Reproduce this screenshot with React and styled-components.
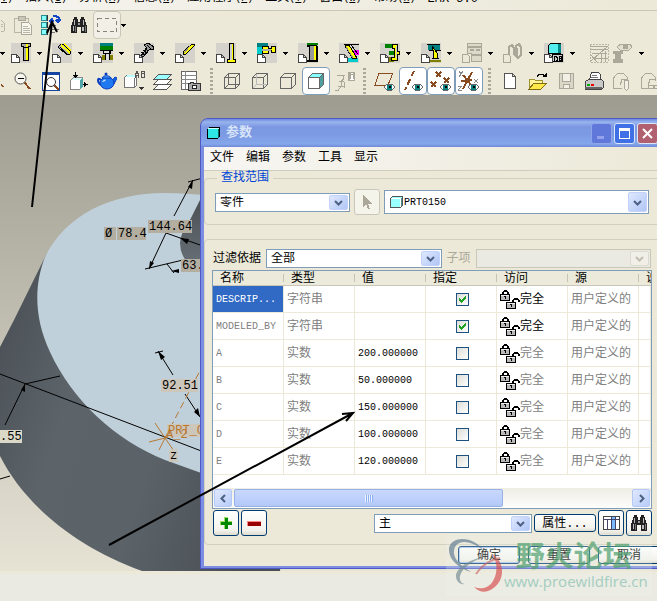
import React, { useState } from 'react'
import styled, { createGlobalStyle, css } from 'styled-components'

const GlobalStyle = createGlobalStyle`
    * {
        box-sizing: border-box;
    }
    body {
        margin: 0;
        background: #ebeae2;
        font-family: "Liberation Mono", "Noto Sans CJK SC", monospace;
        font-size: 12px;
        line-height: 14px;
        color: #000;
    }
    button, select, input {
        font: inherit;
        color: inherit;
        margin: 0;
    }
`

const Desktop = styled.div`
    position: relative;
    display: flex;
    flex-direction: column;
    min-height: 100vh;
    overflow: hidden;
`

// ---------- main window bars ----------

const MenuBar = styled.nav`
    display: flex;
    align-items: flex-end;
    gap: 12px;
    height: 11px;
    padding-bottom: 4px;
    overflow: hidden;
    white-space: nowrap;
    background: linear-gradient(90deg, #f4f3ee, #ece9d8);
    border-bottom: 1px solid #cbc7b8;
`

const MenuLink = styled.a`
    flex: none;
    color: #000;
    text-decoration: none;
    line-height: 14px;
    &:first-child {
        margin-left: -5px;
    }
`

const AccessKey = styled.span`
    font-size: 10px;
`

const ToolRow = styled.div`
    display: flex;
    align-items: center;
    height: 28px;
    overflow: hidden;
    background: #ece9d8;
`

const ToolButton = styled.button`
    flex: none;
    display: flex;
    align-items: center;
    justify-content: center;
    width: 28px;
    height: 28px;
    padding: 0;
    border: 1px solid ${p => (p.$on ? '#7f9db9' : p.$framed ? '#c9c6b8' : 'transparent')};
    border-radius: 4px;
    background: ${p => (p.$on ? '#fff' : p.$framed ? '#f2f0e6' : 'transparent')};
`

const CutButton = styled(ToolButton)`
    width: 9px;
    justify-content: flex-end;
`

const SplitButton = styled.button`
    flex: none;
    display: flex;
    align-items: center;
    gap: 6px;
    width: 41px;
    height: 22px;
    padding: 0;
    border: 0;
    background: transparent;
`

const ArrowButton = styled.button`
    flex: none;
    display: flex;
    align-items: center;
    width: 11px;
    height: 20px;
    padding: 0;
    border: 0;
    background: transparent;
`

const Separator = styled.span`
    flex: none;
    width: 3px;
    height: 26px;
    margin: 0 5px;
    background: repeating-linear-gradient(#aaa799 0 2px, #ece9d8 2px 4px);
`

const Viewport = styled.main`
    flex: 1;
    display: flex;
    align-items: stretch;
    min-height: 476px;
    background: linear-gradient(#9e9c90, #e6e3d5);
    > svg {
        flex: 1;
        display: block;
        height: auto;
    }
`

const StatusBar = styled.footer`
    height: 30px;
    background: #ebeae2;
    border-top: 3px solid #ece9d8;
`

// ---------- icons ----------

const Ico = ({ w = 20, h = 20, children, ...rest }) => (
    <svg width={w} height={h} viewBox={`0 0 ${w} ${h}`} fill="none" shapeRendering="crispEdges" aria-hidden="true" {...rest}>
        {children}
    </svg>
)

const Triangle = () => (
    <Ico w={5} h={3}><path d="M0 0h5v1H4v1H3v1H2V2H1V1H0z" fill="#000" /></Ico>
)

const Page = () => (
    <path d="M.5 11.5h5l3 3v5h-8zM5.5 11.5v3h3" fill="#fff" stroke="#444" />
)

const ToolIcon = ({ off, children }) => (
    <Ico>
        {!off && <path d="M0 0h20v20H0z" fill="#d4d2cb" />}
        {children}
        {off ? <path d="M.5 11.5h5l2 2v6h-7z" fill="#ece9d8" stroke="#aca899" /> : <Page />}
    </Ico>
)

const Binoculars = () => (
    <Ico w={18} h={16}>
        <path d="M4 0h3v2h1v3h2V2h1V0h3v2h1v3h1v3h1v8h-6v-6H7v6H1V8h1V5h1V2h1z" fill="#222" />
        <path d="M4 3h1v5H4zM13 3h1v5h-1zM3 9h1v5H3zM12 10h2v4h-2z" fill="#bbb" />
        <path d="M5 9h1v6H5zM15 9h1v6h-1z" fill="#777" />
        <path d="M8 6h2v2H8z" fill="#999" />
    </Ico>
)

const PasteIcon = () => (
    <Ico>
        <path d="M1.500 3.500h14v14h-14z" fill="#ece9d8" stroke="#b9b6a6" />
        <path d="M5 1h7v4H5z" fill="#c9c6b6" stroke="#aca899" />
        <path d="M8.500 7.500h7l3 3v9h-10z" fill="#f6f5ee" stroke="#aca899" />
        <path d="M10 11h5M10 13h7M10 15h7M10 17h7" stroke="#b9b6a6" />
    </Ico>
)

const TreeIcon = () => (
    <Ico>
        {[0, 7, 14].map(y => (
            <g key={y}>
                <path d={`M0.500 ${y + .5}h5v5h-5z`} fill="#8ff" stroke="#2a8d8d" />
                <path d={`M6 ${y}v6`} stroke="#333" />
            </g>
        ))}
        <path d="M9 10h6M9 14h9M9 17h5" stroke="#777" />
        <path d="M10 8V5M8 6h5M12 1h3l3 2v3M15 5h6" stroke="#1446c8" strokeWidth="2" />
        <path d="M8 6l3-4 2 4zM14 5h6l-3 4z" fill="#1446c8" />
    </Ico>
)

const MarqueeIcon = () => (
    <Ico w={20} h={14}><path d="M.5.5h19v13H.5z" stroke="#888577" strokeDasharray="4 3" /></Ico>
)

const ScrewIcon = () => (
    <ToolIcon>
        <path d="M10.500.5h9v3h-2v14h-5v-14h-2z" fill="#aaa" stroke="#000" />
        <path d="M15 1h2v16h-2z" fill="#ff0" />
        <path d="M12 4h6" stroke="#000" />
    </ToolIcon>
)
const PinsIcon = () => (
    <ToolIcon>
        <path d="M8 2l3-1 8 8-2 3-3-1-8-7z" fill="#aaa" stroke="#000" />
        <path d="M9 2l9 8M12 1l7 7" stroke="#ff0" strokeWidth="2" />
        <path d="M8 4l7 7M11 1l8 8" stroke="#000" />
    </ToolIcon>
)
const PlateIcon = () => (
    <ToolIcon>
        <path d="M7 0h13v3H7z" fill="#008080" />
        <path d="M7 3h13v4H7z" fill="#008000" />
        <path d="M9 12h11v5H9z" fill="#808000" />
        <path d="M7 7h13v1H7zM10 8h8v3h-8zM12 11h5v6h-5z" fill="#000" />
        <path d="M11 8h5v2h-5zM13 11h3v6h-3z" fill="#ddd" />
    </ToolIcon>
)
const BoltIcon = () => (
    <ToolIcon>
        <path d="M10 2l4-2 6 4-1 3-3-1-7 8-2-1 6-8z" fill="#999" stroke="#000" />
        <path d="M7 9l4 3M9 7l4 3M11 5l3 3M13 2l4 4" stroke="#000" strokeWidth="1" />
    </ToolIcon>
)
const RodIcon = () => (
    <ToolIcon>
        <path d="M17 1h2v2l-9 9-2-1V9z" fill="#ff0" stroke="#000" />
        <path d="M15 3l-6 7" stroke="#888" />
    </ToolIcon>
)
const PillarIcon = () => (
    <ToolIcon>
        <path d="M13.500.5h4v16h2v3h-8v-3h2z" fill="#ff0" stroke="#000" />
        <path d="M14 1h2v16h-2z" fill="#ccc" />
    </ToolIcon>
)
const NozzleIcon = () => (
    <ToolIcon>
        <path d="M0 0h11v4H0z" fill="#008080" />
        <path d="M0 4h5v7H0z" fill="#0cc" />
        <path d="M5.500 3.500h6v7h-6zM11.500 5.500h3v-2h4v6h-4v-2h-3z" fill="#ff0" stroke="#000" />
        <path d="M5 6h9v2H5z" fill="#aaa" />
    </ToolIcon>
)
const BushIcon = () => (
    <ToolIcon>
        <path d="M9 0h11v2H9z" fill="#008000" />
        <path d="M11.500 2.500h7v16h-7z" fill="#999" stroke="#000" />
        <path d="M16 3h2v15h-2z" fill="#ff0" />
        <path d="M9 3h2M9 18h11M19 3v15" stroke="#000" strokeWidth="2" />
    </ToolIcon>
)
const SliderIcon = () => (
    <ToolIcon>
        <path d="M15 7h5v5h-5z" fill="#f0f" />
        <path d="M9 15h10v4H9z" fill="#0cc" />
        <path d="M6 3l4-1 8 13-4 1z" fill="#ff0" stroke="#000" />
        <path d="M7 4l7 11" stroke="#888" />
        <path d="M5 1h15M12 2l7 9" stroke="#000" />
    </ToolIcon>
)
const LatchIcon = () => (
    <ToolIcon>
        <path d="M5 1h7v4H5zM9 8h5v4H9z" fill="#008000" />
        <path d="M9 14h5v5H9z" fill="#808000" />
        <path d="M12.500 1.500h5v7h2v3h-2v6h-6v-3h3v-9h-2z" fill="#ff0" stroke="#000" />
        <path d="M16 3v13" stroke="#ccc" />
    </ToolIcon>
)
const EjectIcon = () => (
    <ToolIcon>
        <path d="M7 2h12v5H7z" fill="#008080" />
        <path d="M6 1h13v1H6zM8 7h12v1H8z" fill="#000" />
        <path d="M11 3l5 7 1 5h-5l1-5z" fill="#ff0" stroke="#000" />
        <path d="M8 17h12v2H8z" fill="#808000" />
    </ToolIcon>
)
const OffBlockIcon = () => (
    <ToolIcon off>
        <path d="M5.500.5h14v18h-10v-8h-4z" fill="#dddac9" stroke="#aca899" />
        <path d="M6 4h13M8 7h4M14 7h4M9 12h10" stroke="#aca899" strokeWidth="2" />
    </ToolIcon>
)
const OffHooksIcon = () => (
    <ToolIcon off>
        <path d="M6 12V4l3-2 2 3v7M13 3l3-2 2 3v8l-3 3-3-3zM14 5v8" stroke="#aca899" strokeWidth="2" />
    </ToolIcon>
)
const DbIcon = () => (
    <ToolIcon>
        <path d="M4.500 2.500l2-2h10v10h-12z" fill="#5ee" stroke="#000" />
        <path d="M14 1h3v9h-3z" fill="#088" />
        <path d="M8.500 11.500h10v7h-10z" fill="#ccc" stroke="#000" />
        <path d="M10.500 13v5h2v-1h1v-3h-1v-1zM15.500 13.500h2v2h-2zv4h2v-2" stroke="#000" />
    </ToolIcon>
)
const OffGridIcon = () => (
    <Ico>
        <path d="M1 1h18v18H1z" stroke="#b9b6a6" strokeDasharray="2 1" />
        <path d="M1 3h18M1 6h18M3 10h15M2 18L18 4M2 12l6 7M12 10v9M16 8v11M4 15h15" stroke="#aca899" />
    </Ico>
)
const OffCamIcon = () => (
    <Ico>
        <path d="M0 8h10v3H8v5h2v4H0v-4h2v-5H0z" fill="#aca899" />
        <path d="M4 4l4-3h9l2 3-3 3h-9z" fill="#e2dfce" stroke="#aca899" />
        <path d="M10 2h5v4h-5z" fill="#aca899" />
    </Ico>
)

const ZoomOutIcon = () => (
    <Ico w={18} h={18}>
        <path d="M10 10l6 7" stroke="#8a4a20" strokeWidth="2" />
        <circle cx="6.500" cy="6.500" r="5.500" fill="#f6f5ee" stroke="#555" shapeRendering="auto" />
        <path d="M4 6h6v1H4z" fill="#000" />
    </Ico>
)
const RefitIcon = () => (
    <Ico w={18} h={19}>
        <path d="M.5.5h17v18H.5z" fill="#fff" stroke="#1446a0" />
        <path d="M0 0h18v3H0z" fill="#1446a0" />
        <path d="M11 12l6 6" stroke="#8a4a20" strokeWidth="2" />
        <circle cx="9" cy="10" r="4.500" fill="#fff" stroke="#333" shapeRendering="auto" />
    </Ico>
)
const OrientIcon = () => (
    <Ico w={18} h={18}>
        <path d="M.5 8.500l3-3h9v9l-3 3h-9z" fill="#d8f6f6" stroke="#888" />
        <path d="M1 8h9v9H1z" fill="#fff" />
        <path d="M10 8l3-3v9l-3 3z" fill="#4fa6a6" />
        <path d="M5.500 0v6M3 3.500h5M4 4.500h3M18 12.500h-5M14.500 10v5M15.500 11v3" stroke="#000" />
    </Ico>
)
const TeapotIcon = () => (
    <Ico w={20} h={18} shapeRendering="auto">
        <path d="M4 8C0 4 0 10 4 13" stroke="#0a3cc0" strokeWidth="2" />
        <path d="M14 10l4-5 2 1-3 6z" fill="#1468e8" stroke="#0a3cc0" />
        <ellipse cx="10" cy="11" rx="7" ry="6" fill="#1e78f0" stroke="#0a3cc0" />
        <path d="M5 6c1-3 8-3 9 0z" fill="#4aa0ff" stroke="#0a3cc0" />
        <circle cx="9" cy="2" r="1.500" fill="#0a3cc0" />
        <path d="M5 10c1-2 3-3 4-2-1 1-2 2-4 2z" fill="#bfe2ff" />
    </Ico>
)
const ViewsIcon = () => (
    <Ico w={22} h={20}>
        <path d="M.5 6.500l2-2h10v10l-2 2h-10z" fill="#fff" stroke="#777" />
        <path d="M1 6l2-2h9v2z" fill="#bff" />
        <path d="M10.500 7v9" stroke="#777" />
        <path d="M11.500 7V2.500h1v-2h1v2h1V7M12 4.500h2M17.500 6.500v-6h3v2h-3M20.500 3v3.500h-3" stroke="#555" />
        <path d="M15 16h5v1h-1v1h-1v1h-1v-1h-1v-1h-1z" fill="#333" />
    </Ico>
)
const LayersIcon = () => (
    <Ico w={20} h={17}>
        <path d="M1 16l5-5h13l-5 5z" fill="#fff" stroke="#555" />
        <path d="M1 11l5-5h13l-5 5z" fill="#fff" stroke="#555" />
        <path d="M1 6l5-5h13l-5 5z" fill="#9ff" stroke="#555" />
    </Ico>
)
const ReportIcon = () => (
    <Ico w={20} h={20}>
        <path d="M.5.5h15v18h-15z" fill="#fff" stroke="#666" />
        <path d="M0 4h16M0 8h16M0 12h16M4 0v18" stroke="#888" />
        <path d="M7.500 12.500h2v-1h3v1h7v7h-12z" fill="#aaa" stroke="#333" />
        <circle cx="13.500" cy="16" r="2" fill="#fff" stroke="#222" />
    </Ico>
)
const Cube = ({ front = '#ece9d8', top = '#ece9d8', side = '#ece9d8', hidden, wire = '#666' }) => (
    <Ico w={16} h={16}>
        <path d="M.5 4.500h11v11H.5z" fill={front} stroke="#666" />
        <path d="M.5 4.500l4-4h11l-4 4z" fill={top} stroke="#666" />
        <path d="M11.500 4.500l4-4v11l-4 4z" fill={side} stroke="#666" />
        {hidden && <path d="M4.500 1v10.500H15M4.500 11.500l-4 4" stroke={wire} />}
    </Ico>
)
const OffInfoIcon = () => (
    <Ico w={21} h={19}>
        <path d="M3 3.500h8M9.500 4v3l-2 2v5l-3 4H1M5 9.500h5M10.500 10v6M4 14.500h6" stroke="#aca899" />
        <path d="M14 0h7v9h-7z" fill="#aca899" />
        <path d="M17 1h2v1h-2zM17 3h2v4h1v1h-4V7h1z" fill="#fff" />
    </Ico>
)

const Eye = ({ x = 11, y = 13 }) => (
    <g transform={`translate(${x} ${y})`}>
        <path d="M0 3l3-3h5l3 3-3 3H3z" fill="#fff" stroke="#666" />
        <path d="M3 1h5v5H3z" fill="#0a7f7f" />
        <path d="M5 2h2v2H5z" fill="#000" />
    </g>
)
const PlaneIcon = () => (
    <Ico w={22} h={20}>
        <path d="M5 2h14l-5 12H1z" stroke="#8a4a20" />
        <Eye x={10} />
    </Ico>
)
const AxisIcon = () => (
    <Ico w={22} h={20}><path d="M12 0L3 19" stroke="#8a4a20" strokeWidth="2" strokeDasharray="6 3" /><Eye x={10} /></Ico>
)
const PointsIcon = () => (
    <Ico w={22} h={20}>
        <path d="M6 1l5 5M11 1l-5 5M1 11l5 5M6 11l-5 5M14 7l5 5M19 7l-5 5" stroke="#8a4a20" strokeWidth="2" />
        <Eye x={10} />
    </Ico>
)
const CsysIcon = () => (
    <Ico w={22} h={20}>
        <path d="M3 10l11-1M5 18L14 1M5 4l9 11" stroke="#8a4a20" strokeWidth="2" />
        <path d="M1 0l2 3 2-3M3 3L1 6M16 8l4 4M20 8l-4 4M0 15h4l-4 4h4" stroke="#888" />
        <Eye x={10} />
    </Ico>
)
const NewIcon = () => (
    <Ico w={12} h={16}><path d="M.5.5h8l3 3v12H.5zM8.500.5v3h3" fill="#fff" stroke="#555" /></Ico>
)
const OpenIcon = () => (
    <Ico w={20} h={17}>
        <path d="M1 16V6h5l1 1h7v4" fill="#fff39a" stroke="#a0922c" />
        <path d="M1 16l5-6h13l-6 6z" fill="#ffe94a" stroke="#806c10" />
        <path d="M9 4c2-4 6-4 8 0" stroke="#000" />
        <path d="M14 4h5V0z" fill="#000" />
    </Ico>
)
const SaveIcon = () => (
    <Ico w={15} h={16}>
        <path d="M.5.5h14v15H.5z" fill="#dad7c8" stroke="#aca899" />
        <path d="M3.500.5h8v8h-8zM4.500 11.500h6v4h-6z" fill="#f2f0e6" stroke="#aca899" />
    </Ico>
)
const PrintIcon = () => (
    <Ico w={19} h={18}>
        <path d="M4.500 7.500l2-7h7l2 2v5z" fill="#fff" stroke="#444" />
        <path d="M7 3h5M6 5h7" stroke="#777" />
        <path d="M.5 9.500l3-2h13l2 2v6l-2 2H.5z" fill="#c9c9c9" stroke="#444" />
        <path d="M0 15h17v2H0z" fill="#666" />
        <path d="M2 12h3v2H2z" fill="#0a0" />
        <path d="M6 12h3v2H6z" fill="#e00" />
    </Ico>
)
const MailIcon = ({ link }) => (
    <Ico w={20} h={19}>
        <path d="M1.500 16.500V6l4-4.500h6l4 4V9M1 16.500h9M9 7.500h6M8 13l2-5" stroke="#aca899" />
        {link
            ? <path d="M8.500 13.500h6v3h-6zM13.500 13.500h6v3h-6z" fill="#ece9d8" stroke="#aca899" />
            : <path d="M12.500 8.500h4v8l-2 2-2-2z" fill="#f2f0e6" stroke="#aca899" />}
    </Ico>
)

const CursorIcon = () => (
    <Ico w={10} h={15}><path d="M1 0v12l3-3 2 5h2l-2-5h4z" fill="#aca899" /></Ico>
)
const PartIcon = () => (
    <Ico w={13} h={12}>
        <path d="M.5 2.500l2-2h10v9l-2 2H.5z" fill="#9ff" stroke="#555" />
        <path d="M1 3h9v8H1z" fill="#9ff" />
        <path d="M1 2.500h9M10.500 2v9" stroke="#fff" />
        <path d="M11 2h1v8h-1z" fill="#4d8f8f" />
    </Ico>
)
const WindowIcon = () => (
    <Ico w={13} h={12}>
        <path d="M.5 2.500l2-2h10v9l-2 2H.5z" fill="#2ee6e6" stroke="#000" />
        <path d="M1 1h11v1H1z" fill="#cff" />
        <path d="M11 2h1v9h-1z" fill="#066" />
    </Ico>
)
const LocksIcon = () => (
    <Ico w={20} h={20}>
        <path d="M2 4V2h1V1h1V0h3v1h1v1h1v2H7V2H4v2z" fill="#000" />
        <path d="M12 13v-3h1V9h1V8h4v1h1v1h1v2h-2v-2h-4v3z" fill="#000" />
        <path d="M.5 4.500h9v6h-9zM6.500 12.500h9v6h-9z" fill="#b9b9b9" stroke="#000" />
        <path d="M1 5h8v1H1zM7 13h8v1H7z" fill="#eee" />
        <path d="M4 6h2v3H5V7H4zM10 14h2v3h-1v-2h-1z" fill="#000" />
    </Ico>
)
const PlusIcon = () => (
    <Ico w={12} h={12}>
        <path d="M4 0h4v4h4v4H8v4H4V8H0V4h4z" fill="#9fdf6a" />
        <path d="M5 1h3v4h4v3H8v4H5V8H1V5h4z" fill="#080" />
    </Ico>
)
const MinusIcon = () => (
    <Ico w={14} h={5}><path d="M0 0h14v5H0z" fill="#f88" /><path d="M1 1h13v4H1z" fill="#900" /></Ico>
)
const ColumnsIcon = () => (
    <Ico w={17} h={14}>
        <path d="M.5.5h16v13H.5z" fill="#fff" stroke="#444" />
        <path d="M8 1h4v12H8z" fill="#7ab8ff" />
        <path d="M0 3.500h17M4.500 3v11M8.500 0v14M12.500 0v14" stroke="#446" />
    </Ico>
)
const TickIcon = () => (
    <Ico w={7} h={7}><path d="M0 2h1v1h1v1h1V3h1V2h1V1h1V0h1v3H6v1H5v1H4v1H3v1H2V6H1V5H0z" fill="#21a121" /></Ico>
)
const Chevron = ({ dir = 'down', color = '#4d6185' }) => (
    <Ico w={9} h={9} shapeRendering="auto">
        <path
            d={{ down: 'M1 3l3.500 3.500L8 3', left: 'M6 1L2.500 4.500 6 8', right: 'M3 1l3.500 3.500L3 8' }[dir]}
            stroke={color}
            strokeWidth="2"
        />
    </Ico>
)

// ---------- parameter dialog ----------

const Dialog = styled.section`
    position: absolute;
    top: 118px;
    left: 200px;
    right: -8px;
    padding: 0 2px 2px 3px;
    border: 1px solid #4f58c8;
    border-radius: 8px 8px 0 0;
    background: #7b8ee0;
    overflow: hidden;
`

const TitleBar = styled.header`
    display: flex;
    align-items: center;
    gap: 6px;
    height: 28px;
    margin: 0 -2px 0 -3px;
    padding: 0 6px;
    background: linear-gradient(#6c88dc 0, #98b4ee 3px, #7c98e2 8px, #7c9ae4 15px, #84a6ea 25px, #7088d8 28px);
`

const DialogBody = styled.div`
    background: #ece9d8;
`

const Title = styled.h1`
    flex: 1;
    margin: 0;
    font-size: 13px;
    line-height: 16px;
    font-weight: bold;
    color: #d8e4f8;
`

const captionColors = {
    min: '#5f78da',
    max: '#3f70e6',
    close: '#b0606e',
}

const CaptionButton = styled.button`
    display: flex;
    align-items: center;
    justify-content: center;
    width: 21px;
    height: 21px;
    margin-left: -4px;
    padding: 0;
    border: 1px solid ${p => (p.$kind === 'min' ? '#90a6ea' : '#dce6fa')};
    border-radius: 3px;
    background: ${p => captionColors[p.$kind]};
`

const DialogMenu = styled.nav`
    display: flex;
    align-items: center;
    gap: 12px;
    height: 24px;
    padding: 0 6px 1px;
    background: linear-gradient(90deg, #f7f6f3, #ece9d8);
    border-bottom: 1px solid #d0cdbc;
`

const DialogMenuLink = styled.a`
    color: #000;
    text-decoration: none;
`

const Group = styled.fieldset`
    min-width: 0;
    margin: 0 1px ${p => (p.$last ? 0 : 14)}px 0;
    padding: 0;
    border: 1px solid #d0d0bf;
    border-radius: 4px;
`

const Legend = styled.legend`
    margin-left: 12px;
    padding: 1px 4px 0;
    height: 14px;
    line-height: 13px;
    color: #0046d5;
`

const ScopeRow = styled.div`
    display: flex;
    align-items: center;
    gap: 4px;
    padding: 4px 11px 9px 10px;
`

const FilterRow = styled.div`
    display: flex;
    align-items: center;
    gap: 5px;
    padding: 9px 9px 0 8px;
`

const Label = styled.label`
    white-space: nowrap;
    color: ${p => (p.$off ? '#aca899' : '#000')};
`

const SelectBox = styled.div`
    flex: ${p => p.$flex || '1 1 0'};
    min-width: 0;
    display: grid;
    grid-template-columns: auto 1fr;
    align-items: center;
    height: ${p => (p.$tall ? 24 : 19)}px;
    border: 1px solid ${p => (p.$off ? '#c9c7ba' : '#7f9db9')};
    background: ${p => (p.$off ? '#ebeae2' : '#fff')};
    > svg {
        grid-area: 1 / 1;
        margin-left: 5px;
    }
`

const Select = styled.select`
    grid-area: 1 / 1 / 2 / 3;
    width: 100%;
    height: 100%;
    padding: 1px 20px 0 ${p => (p.$icon ? 19 : 4)}px;
    border: 0;
    outline: 0;
    appearance: none;
    background: transparent;
    font-size: ${p => (p.$icon ? 10 : 12)}px;
`

const DropMark = styled.span`
    grid-area: 1 / 1 / 2 / 3;
    justify-self: end;
    align-self: stretch;
    display: flex;
    align-items: center;
    justify-content: center;
    width: 19px;
    margin: 1px;
    border-radius: 2px;
    pointer-events: none;
    background: ${p => (p.$off ? '#f0efe8' : 'linear-gradient(135deg, #dfe8fe, #b0c6f6)')};
    border: 1px solid ${p => (p.$off ? '#dddbcf' : '#c2d2fa')};
`

const GridBox = styled.div`
    margin: 2px 8px 0 7px;
    border: 1px solid #7f9db9;
    background: #fff;
    overflow: hidden;
`

const Table = styled.table`
    width: 100%;
    table-layout: fixed;
    border-collapse: separate;
    border-spacing: 0;
`

const NarrowCol = styled.col`
    width: 71px;
`

const Th = styled.th`
    height: 15px;
    padding: 2px 0 0 7px;
    font-weight: normal;
    text-align: left;
    line-height: 12px;
    white-space: nowrap;
    overflow: hidden;
    background: linear-gradient(90deg, transparent 70px, #c7c5b2 70px) 0 3px / 71px 8px no-repeat, #ebeadb;
    border-bottom: 1px solid #cbc7b8;
`

const Td = styled.td`
    height: 27px;
    padding: 1px 0 0 3px;
    border-right: 1px solid #ece9d8;
    border-bottom: 1px solid #ece9d8;
    white-space: nowrap;
    overflow: hidden;
    color: ${p => (p.$dark ? '#000' : '#808080')};
    ${p => p.$latin && css`font-size: 10px;`}
    ${p => p.$center && css`text-align: center;`}
    ${p => p.$selected && css`
        background: #316ac5;
        color: #fff;
    `}
`

const CheckCell = styled.span`
    display: grid;
    place-items: center;
    > * {
        grid-area: 1 / 1;
    }
    svg {
        pointer-events: none;
    }
`

const Check = styled.input`
    appearance: none;
    width: 13px;
    height: 13px;
    border: 1px solid #1c5180;
    background: linear-gradient(135deg, #dcdcd7, #fff);
`

const Access = styled.span`
    display: flex;
    align-items: center;
    svg {
        flex: none;
    }
`

const ScrollBar = styled.div`
    display: flex;
    gap: 2px;
    height: 20px;
    margin-top: 13px;
    padding: 1px;
    background: linear-gradient(#eeede5, #fdfdfb);
`

const ScrollButton = styled.button`
    flex: none;
    display: flex;
    align-items: center;
    justify-content: center;
    width: 18px;
    padding: 0;
    border: 1px solid #b4c8f6;
    border-radius: 2px;
    background: linear-gradient(135deg, #dfe8fe, #b9cdf9);
`

const Track = styled.div`
    flex: 1;
    display: flex;
`

const Thumb = styled.div`
    display: flex;
    align-items: center;
    justify-content: center;
    width: 68%;
    border: 1px solid #98b0e8;
    border-radius: 2px;
    background: linear-gradient(#c9d8fc, #bccffc 60%, #b4c8f6);
`

const Grip = styled.span`
    width: 8px;
    height: 7px;
    background: repeating-linear-gradient(90deg, #eef4fe 0 1px, #8cb0f8 1px 2px);
`

const GridTools = styled.div`
    display: flex;
    align-items: center;
    gap: 2px;
    padding: 1px 8px 8px;
`

const Spacer = styled.span`
    flex: 0 1 103px;
`

const XpButton = styled.button`
    flex: none;
    display: flex;
    align-items: center;
    justify-content: center;
    width: ${p => (p.$square ? 26 : 62)}px;
    height: ${p => (p.$square ? 26 : 18)}px;
    padding: ${p => (p.$square ? 0 : 1)}px 0 0;
    border: 1px solid ${p => (p.$off ? '#c9c7ba' : '#003c74')};
    border-radius: 3px;
    background: ${p => (p.$off ? '#f5f4ea' : 'linear-gradient(#fff, #f3f2ec 80%, #dedbcf)')};
    box-shadow: ${p => (p.$default ? 'inset 0 0 0 1px #a8c4f4' : 'none')};
`

const DialogFooter = styled.footer`
    display: flex;
    justify-content: flex-end;
    gap: 8px;
    padding: 1px 2px 2px;
`

// ---------- overlays ----------

const Watermark = styled.aside`
    position: absolute;
    right: 5px;
    bottom: 5px;
    display: flex;
    align-items: center;
    width: 206px;
    height: 62px;
    background: rgba(236, 244, 236, 0.25);
    pointer-events: none;
`

const WatermarkText = styled.div`
    display: flex;
    flex-direction: column;
    align-items: flex-end;
    margin-left: -4px;
`

const SiteName = styled.strong`
    font-family: "Noto Sans CJK SC", sans-serif;
    font-size: 29px;
    line-height: 32px;
    padding-right: 16px;
    color: #4e9f6e;
    opacity: 0.7;
`

const SiteUrl = styled.span`
    font-family: "Open Sans", sans-serif;
    font-size: 15px;
    line-height: 22px;
    color: #a4ccc0;
`

const Arrows = styled.svg`
    position: absolute;
    top: 0;
    left: 0;
    pointer-events: none;
`

const menus = [
    ['', 'V'], ['插入', 'I'], ['分析', 'A'], ['信息', 'N'], ['应用程序', 'P'],
    ['工具', 'T'], ['窗口', 'W'], ['帮助', 'H'],
]

const componentTools = [
    ['螺钉', ScrewIcon], ['定位销', PinsIcon], ['模板', PlateIcon], ['螺栓', BoltIcon],
    ['顶杆', RodIcon], ['支柱', PillarIcon], ['喷嘴', NozzleIcon], ['衬套', BushIcon],
    ['滑块', SliderIcon], ['锁模', LatchIcon], ['顶出', EjectIcon], ['模块', OffBlockIcon],
    ['吊钩', OffHooksIcon], ['元件库', DbIcon],
]

const viewTools = [
    [
        ['缩小', ZoomOutIcon], ['重新调整', RefitIcon], ['定向', OrientIcon], ['外观', TeapotIcon],
        ['视图列表', ViewsIcon], ['层', LayersIcon], ['视图管理器', ReportIcon],
    ],
    [
        ['线框', () => <Cube hidden />], ['隐藏线', () => <Cube hidden wire="#bbb" />], ['无隐藏线', () => <Cube />],
        ['着色', () => <Cube front="#fff" top="#8ff" side="#4f9f9f" />, true], ['信息', OffInfoIcon],
    ],
    [
        ['基准平面', PlaneIcon], ['基准轴', AxisIcon, true], ['基准点', PointsIcon, true], ['坐标系', CsysIcon, true],
    ],
    [
        ['新建', NewIcon], ['打开', OpenIcon], ['保存', SaveIcon], ['打印', PrintIcon],
        ['邮件', MailIcon], ['邮件链接', () => <MailIcon link />],
    ],
]

const startRows = [
    { name: 'DESCRIPTION', short: 'DESCRIP...', type: '字符串', value: '', on: true },
    { name: 'MODELED_BY', type: '字符串', value: '', on: true },
    { name: 'A', type: '实数', value: '200.000000', on: false },
    { name: 'B', type: '实数', value: '50.000000', on: false },
    { name: 'C', type: '实数', value: '150.000000', on: false },
    { name: 'D', type: '实数', value: '100.000000', on: false },
    { name: 'E', type: '实数', value: '120.000000', on: false },
]

const Dim = ({ x, y, w, h = 13, fill = '#b3aea0', color = '#000', children }) => (
    <g>
        {fill && <rect x={x} y={y} width={w} height={h} fill={fill} />}
        <text x={x + 1} y={y + h - 3} fill={color}>{children}</text>
    </g>
)

const Model = () => (
    <svg width="100%" fontFamily="'Liberation Mono', monospace" fontSize="12">
        <defs>
            <linearGradient id="body" x1="0" y1="0" x2="1" y2="0.350">
                <stop offset="0" stopColor="#474c51" />
                <stop offset="0.350" stopColor="#5c646a" />
                <stop offset="0.650" stopColor="#5b6369" />
                <stop offset="1" stopColor="#4a4f54" />
            </linearGradient>
            <linearGradient id="hole" x1="0" y1="0" x2="0" y2="1">
                <stop offset="0" stopColor="#474b50" />
                <stop offset="1" stopColor="#666e75" />
            </linearGradient>
        </defs>
        <g transform="translate(0 -95)">
            <path d="M46 255L14 320 0 347V456C22 500 70 545 142 571H280L300 400 200 240z" fill="url(#body)" />
            <path
                d="M300 215C250 200 205 193 165 193C110 193 65 216 45 257C34 285 34 318 50 352C72 400 115 440 165 460L204 474 300 500z"
                fill="#c0d0da"
            />
            <path d="M204 192L190 220Q180 234 180 243 180 254 187 262H204z" fill="url(#hole)" />
            <g stroke="#000" fill="none">
                <path d="M174 216l19-36M188 182l15-4M150 232h17M166 233l-17 36M145 269l38-9M166 233l37 13M167 264l7 9" />
                <path d="M0 374l204 78M25 384l35-8M5 425l20-41M0 479l10-3M155 353l8-2M158 351l15 24M185 394l15 23" />
            </g>
            <path d="M193 180l-1 9-4-2zM149 269l1-8 4 2zM180 238l9 1-2 5zM171 271l8-2v4zM25 384v8l-4-2zM158 351l7 6-4 3zM200 417l-6-5 4-4z" />
            <g stroke="#b87830" fill="none">
                <path d="M204 363L165 438" strokeDasharray="7 4" />
                <path d="M165 438l-10-15M165 438l-16 4M165 438l-6 12M165 438l9 13M165 438l13-6" />
            </g>
            <Dim x={104} y={227} w={12}>Ø</Dim>
            <Dim x={117} y={227} w={29}>78.4</Dim>
            <Dim x={148} y={220} w={44}>144.64</Dim>
            <Dim x={181} y={259} w={24}>63.</Dim>
            <Dim x={161} y={379} w={37} fill="#cdc6ba">92.51</Dim>
            <Dim x={167} y={424} w={36} fill="#cdc6ba" color="#b87830">PRT_C</Dim>
            <Dim x={165} y={428} w={24} fill={null} color="#b87830">A_2</Dim>
            <Dim x={169} y={449} w={9} fill="#cdc6ba">z</Dim>
            <Dim x={-1} y={430} w={23} fill="#dcd8c8">.55</Dim>
        </g>
    </svg>
)

const Combo = ({ id, label, options, icon, tall, off, flex }) => (
    <SelectBox $flex={flex} $tall={tall} $off={off}>
        {icon}
        <Select id={id} aria-label={label} $icon={!!icon} disabled={off}>
            {options.map(o => <option key={o}>{o}</option>)}
        </Select>
        <DropMark $off={off}><Chevron color={off ? '#c0beb0' : undefined} /></DropMark>
    </SelectBox>
)

const ParameterDialog = () => {
    const [rows, setRows] = useState(startRows)
    const [selected, setSelected] = useState(0)

    function toggle(index) {
        setRows(rows.map((r, i) => (i === index ? { ...r, on: !r.on } : r)))
    }

    return (
        <Dialog>
            <TitleBar>
                <WindowIcon />
                <Title>参数</Title>
                <CaptionButton $kind="min" aria-label="最小化">
                    <Ico w={12} h={12}><path d="M1 9h7v3H1z" fill="#93a2ea" /></Ico>
                </CaptionButton>
                <CaptionButton $kind="max" aria-label="最大化">
                    <Ico w={11} h={11}><path d="M.5.5h10v10H.5z" stroke="#fff" /><path d="M0 0h11v3H0z" fill="#fff" /></Ico>
                </CaptionButton>
                <CaptionButton $kind="close" aria-label="关闭">
                    <Ico w={11} h={11} shapeRendering="auto"><path d="M1 1l9 9M10 1l-9 9" stroke="#fff" strokeWidth="2" /></Ico>
                </CaptionButton>
            </TitleBar>
            <DialogBody>
                <DialogMenu>
                    {['文件', '编辑', '参数', '工具', '显示'].map(m => <DialogMenuLink key={m} href="#">{m}</DialogMenuLink>)}
                </DialogMenu>

                <Group>
                    <Legend>查找范围</Legend>
                    <ScopeRow>
                        <Combo label="对象类型" options={['零件']} flex="0 0 135px" />
                        <XpButton $square $off aria-label="选取"><CursorIcon /></XpButton>
                        <Combo label="模型" options={['PRT0150']} icon={<PartIcon />} tall />
                    </ScopeRow>
                </Group>

                <Group $last>
                    <FilterRow>
                        <Label htmlFor="filter">过滤依据</Label>
                        <Combo id="filter" options={['全部']} />
                        <Label htmlFor="sub" $off>子项</Label>
                        <Combo id="sub" options={['']} off />
                    </FilterRow>
                    <GridBox>
                        <Table>
                            <colgroup>
                                {[1, 2, 3, 4, 5, 6].map(n => <NarrowCol key={n} />)}
                                <col />
                            </colgroup>
                            <thead>
                                <tr>
                                    {['名称', '类型', '值', '指定', '访问', '源', '说明'].map(h => <Th key={h}>{h}</Th>)}
                                </tr>
                            </thead>
                            <tbody>
                                {rows.map((r, i) => (
                                    <tr key={r.name} onClick={() => setSelected(i)}>
                                        <Td $latin $selected={i === selected}>{r.short || r.name}</Td>
                                        <Td>{r.type}</Td>
                                        <Td $latin $dark>{r.value}</Td>
                                        <Td $center>
                                            <CheckCell>
                                                <Check type="checkbox" aria-label={'指定 ' + r.name} checked={r.on} onChange={() => toggle(i)} />
                                                {r.on && <TickIcon />}
                                            </CheckCell>
                                        </Td>
                                        <Td $dark={i < 2}><Access><LocksIcon />完全</Access></Td>
                                        <Td>用户定义的</Td>
                                        <Td />
                                    </tr>
                                ))}
                            </tbody>
                        </Table>
                        <ScrollBar>
                            <ScrollButton aria-label="向左"><Chevron dir="left" /></ScrollButton>
                            <Track><Thumb><Grip /></Thumb></Track>
                            <ScrollButton aria-label="向右"><Chevron dir="right" /></ScrollButton>
                        </ScrollBar>
                    </GridBox>
                    <GridTools>
                        <XpButton $square aria-label="添加"><PlusIcon /></XpButton>
                        <XpButton $square aria-label="删除"><MinusIcon /></XpButton>
                        <Spacer />
                        <Combo label="参数集" options={['主']} />
                        <XpButton>属性...</XpButton>
                        <XpButton $square aria-label="列"><ColumnsIcon /></XpButton>
                        <XpButton $square aria-label="查找"><Binoculars /></XpButton>
                    </GridTools>
                </Group>

                <DialogFooter>
                    <XpButton $default>确定</XpButton>
                    <XpButton>重置</XpButton>
                    <XpButton>取消</XpButton>
                </DialogFooter>
            </DialogBody>
        </Dialog>
    )
}

const App = () => (
    <Desktop>
        <GlobalStyle />
        <MenuBar>
            {menus.map(([text, key]) => (
                <MenuLink key={key} href="#">{text}<AccessKey>(<u>{key}</u>)</AccessKey></MenuLink>
            ))}
            <MenuLink href="#">EMX 5.0</MenuLink>
        </MenuBar>
        <ToolRow>
            <CutButton aria-label="复制">
                <Ico w={9} h={20}><path d="M0 4h1l3 3v11H0M0 9h3M0 12h3" stroke="#aca899" /></Ico>
            </CutButton>
            <ToolButton aria-label="粘贴"><PasteIcon /></ToolButton>
            <ToolButton aria-label="再生"><TreeIcon /></ToolButton>
            <ToolButton aria-label="查找"><Binoculars /></ToolButton>
            <ToolButton $framed aria-label="框选"><MarqueeIcon /></ToolButton>
            <ArrowButton aria-label="框选选项"><Triangle /></ArrowButton>
        </ToolRow>
        <ToolRow>
            <ArrowButton aria-label="更多"><Triangle /></ArrowButton>
            {componentTools.map(([label, Icon]) => (
                <SplitButton key={label} aria-label={label}><Icon /><Triangle /></SplitButton>
            ))}
            <ToolButton aria-label="网格"><OffGridIcon /></ToolButton>
            <SplitButton aria-label="相机"><OffCamIcon /><Triangle /></SplitButton>
        </ToolRow>
        <ToolRow>
            <CutButton aria-label="放大">
                <Ico w={9} h={18}><path d="M0 13l3 4" stroke="#8a4a20" strokeWidth="2" /></Ico>
            </CutButton>
            {viewTools.map((group, i) => (
                <React.Fragment key={i}>
                    {i > 0 && <Separator />}
                    {group.map(([label, Icon, on]) => (
                        <ToolButton key={label} $on={on} aria-label={label}><Icon /></ToolButton>
                    ))}
                </React.Fragment>
            ))}
        </ToolRow>
        <Viewport><Model /></Viewport>
        <StatusBar />

        <ParameterDialog />

        <Watermark>
            <svg width="62" height="62" viewBox="0 0 62 62" fill="none" opacity="0.650">
                <path d="M38 17C30 3 6 0 3 14c-1 12 10 20 22 24C12 30 5 22 9 13 14 4 28 8 38 17z" fill="#5a7890" />
                <path d="M46 20c14 8 14 30-4 37-5 2-10 0-14-4 8 3 16 1 20-8 4-8 3-18-2-25z" fill="#d84848" />
                <path d="M10 42c0-8 14-17 28-19-12 4-22 11-24 19-1 5 2 8 5 8-5 1-9-3-9-8z" fill="#708890" />
                <path d="M30 40c4-6 12-14 24-16" stroke="#c86868" strokeWidth="2" />
            </svg>
            <WatermarkText>
                <SiteName>野火论坛</SiteName>
                <SiteUrl>www.proewildfire.cn</SiteUrl>
            </WatermarkText>
        </Watermark>

        <Arrows width="400" height="560" stroke="#000" strokeWidth="2" fill="none">
            <path d="M32 207L52 22M47 33l5-11 5 10" />
            <path d="M109 545L353 413M342 414l11-1-7 8" />
        </Arrows>
    </Desktop>
)

export default App
